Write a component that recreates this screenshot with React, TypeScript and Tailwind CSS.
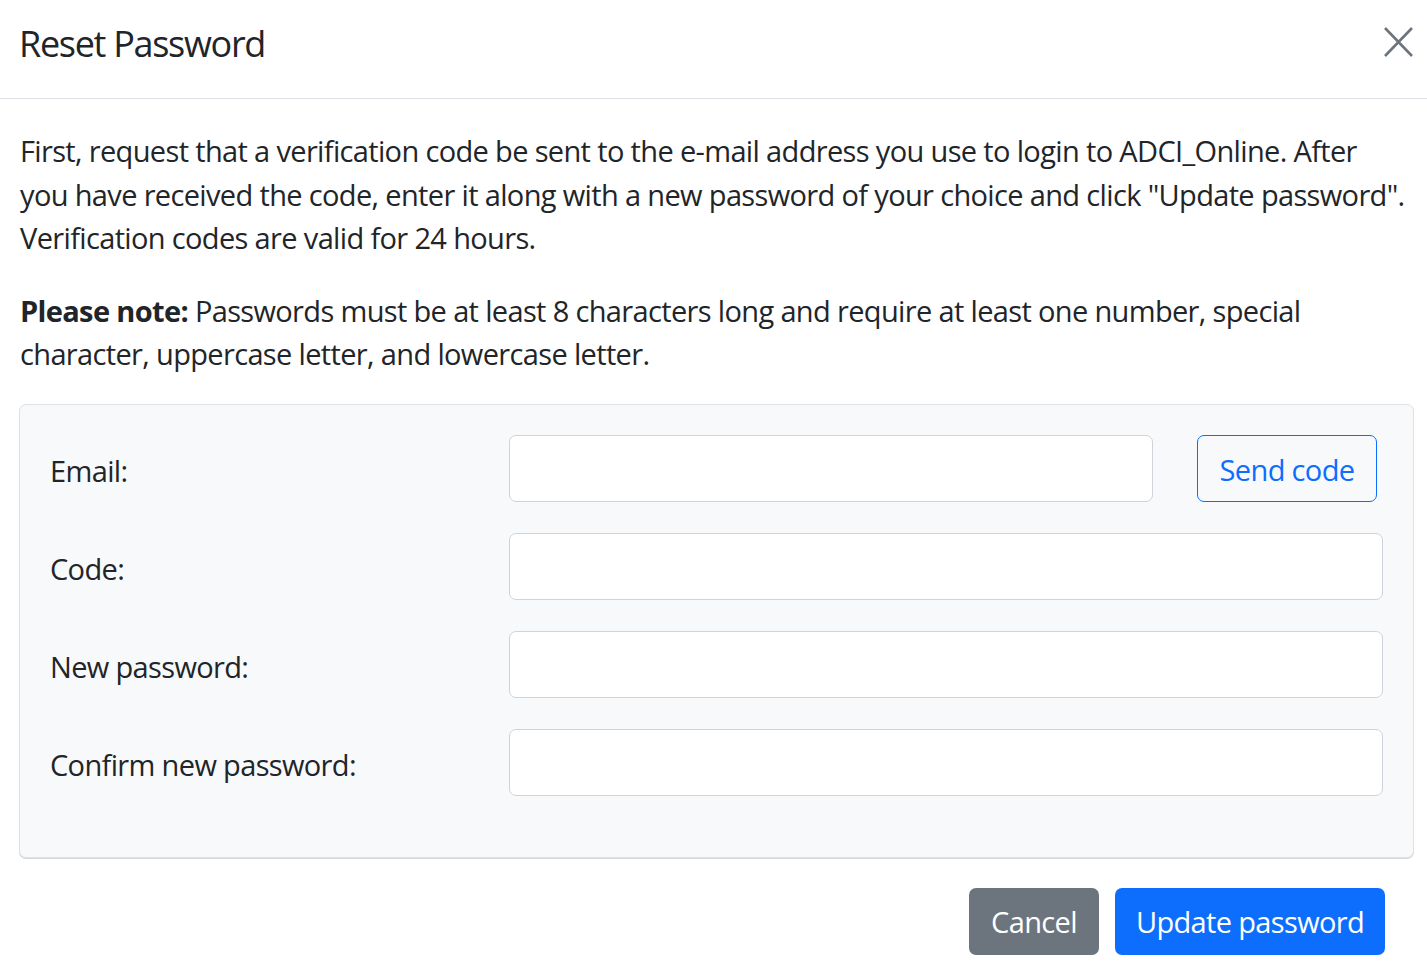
const Field = ({ label, children }: { label: string; children: React.ReactNode }) => (
  <div className="flex items-center">
    <label className="w-[459px] shrink-0 pt-[6px]">{label}</label>
    <div className="flex flex-1 items-center">{children}</div>
  </div>
)

const inputCls =
  'h-[67px] w-full rounded-[7px] border border-[#ced4da] bg-white px-[21px] text-[29px] outline-none'

export default function App() {
  return (
    <div
      className="min-h-screen bg-white text-[29px] leading-[1.5] tracking-[-0.65px] text-[#212529]"
      style={{ fontFamily: '"Open Sans", "Noto Sans", sans-serif' }}
    >
      <header className="flex h-[99px] items-start justify-between border-b border-[#dee2e6] pl-[19px] pr-[14px]">
        <h5 className="pt-[22px] text-[36px] leading-[1.2] tracking-[-1.3px]">Reset Password</h5>
        <button type="button" className="mt-[27px] text-[#6c757d]">
          <svg width="29" height="30" viewBox="0 0 29 30" fill="none" stroke="currentColor" strokeWidth="2.6">
            <path d="M1 1 L28 29 M28 1 L1 29" />
          </svg>
        </button>
      </header>

      <main className="pl-[19px] pr-[13px] pt-[30px]">
        <p className="mb-[29px] pl-px">
          First, request that a verification code be sent to the e-mail address you use to login to ADCI_Online. After
          <br />
          you have received the code, enter it along with a new password of your choice and click "Update password".
          <br />
          Verification codes are valid for 24 hours.
        </p>
        <p className="mb-[28px] pl-px">
          <strong className="font-bold">Please note:</strong> Passwords must be at least 8 characters long and require
          at least one number, special
          <br />
          character, uppercase letter, and lowercase letter.
        </p>

        <form className="flex flex-col gap-[31px] rounded-[7px] border border-[#dee2e6] bg-[#f8f9fa] pb-[61px] pl-[30px] pr-[30px] pt-[30px] shadow-[0_1px_0_#d6d8de]">
          <Field label="Email:">
            <input className={`${inputCls} mr-[44px]`} type="email" />
            <button
              type="button"
              className="h-[67px] w-[180px] shrink-0 rounded-[7px] border border-[#0d6efd] pt-[4px] text-[#0d6efd]"
            >
              Send code
            </button>
            <div className="w-[6px] shrink-0" />
          </Field>
          <Field label="Code:">
            <input className={inputCls} type="text" />
          </Field>
          <Field label="New password:">
            <input className={inputCls} type="password" />
          </Field>
          <Field label="Confirm new password:">
            <input className={inputCls} type="password" />
          </Field>
        </form>

        <footer className="flex justify-end gap-[16px] pr-[29px] pt-[30px]">
          <button type="button" className="h-[67px] w-[130px] rounded-[7px] bg-[#6c757d] pt-[2px] text-white">
            Cancel
          </button>
          <button type="button" className="h-[67px] w-[270px] rounded-[7px] bg-[#0d6efd] pt-[2px] text-white">
            Update password
          </button>
        </footer>
      </main>
    </div>
  )
}
